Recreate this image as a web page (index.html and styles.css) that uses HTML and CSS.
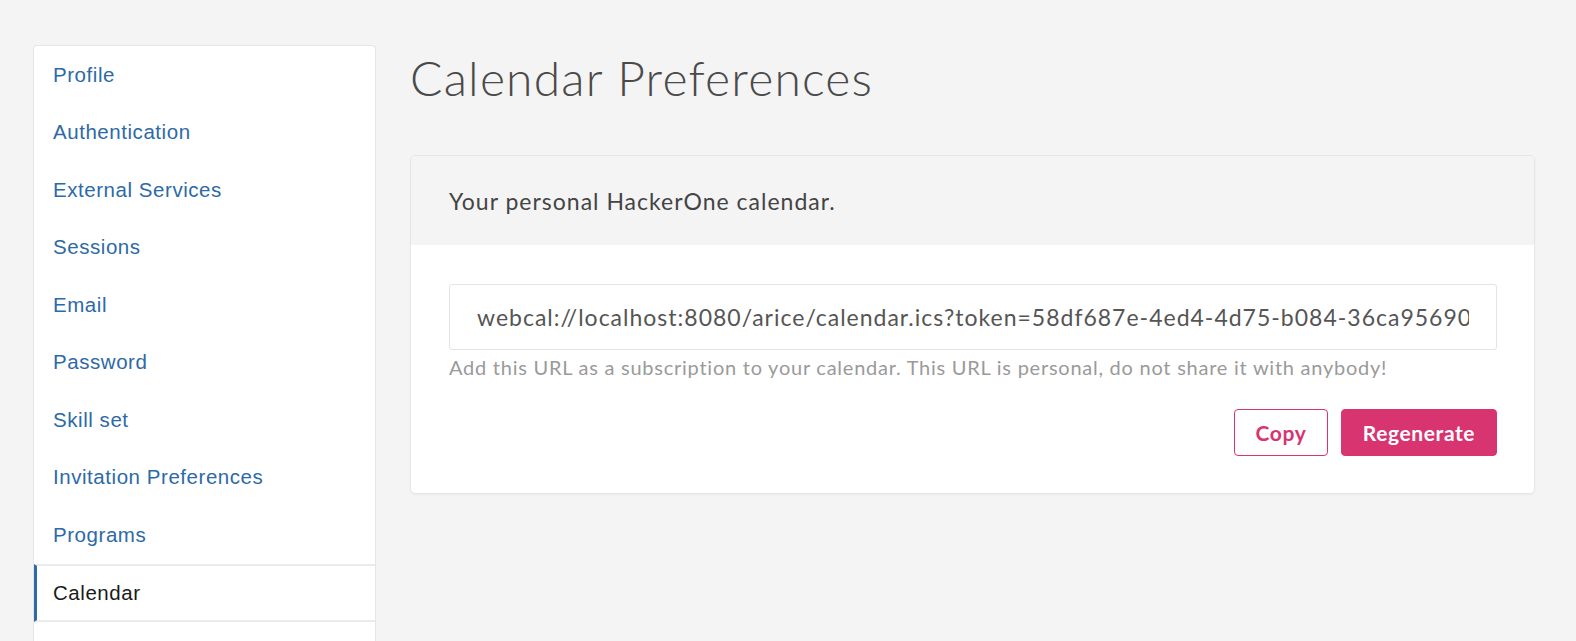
FILE: index.html
```html
<!DOCTYPE html>
<html lang="en">
<head>
<meta charset="utf-8">
<title>Calendar Preferences</title>
<link rel="stylesheet" href="styles.css">
</head>
<body>
<div class="page">
  <nav class="sidebar">
    <a class="nav-item" href="#">Profile</a>
    <a class="nav-item" href="#">Authentication</a>
    <a class="nav-item" href="#">External Services</a>
    <a class="nav-item" href="#">Sessions</a>
    <a class="nav-item" href="#">Email</a>
    <a class="nav-item" href="#">Password</a>
    <a class="nav-item" href="#">Skill set</a>
    <a class="nav-item" href="#">Invitation Preferences</a>
    <a class="nav-item" href="#">Programs</a>
    <a class="nav-item active" href="#">Calendar</a>
    <a class="nav-item" href="#">&nbsp;</a>
  </nav>
  <main class="main">
    <h1 class="title">Calendar Preferences</h1>
    <section class="card">
      <div class="card-header">Your personal HackerOne calendar.</div>
      <div class="card-body">
        <input class="url-input" type="text" readonly value="webcal://localhost:8080/arice/calendar.ics?token=58df687e-4ed4-4d75-b084-36ca95690c1e">
        <p class="hint">Add this URL as a subscription to your calendar. This URL is personal, do not share it with anybody!</p>
        <div class="actions">
          <button class="btn btn-outline" type="button">Copy</button>
          <button class="btn btn-primary" type="button">Regenerate</button>
        </div>
      </div>
    </section>
  </main>
</div>
</body>
</html>
```
FILE: styles.css
```css
* { box-sizing: border-box; }
html, body { margin: 0; padding: 0; }
body {
  background: #f4f4f4;
  height: 641px;
  overflow: hidden;
  font-family: "Lato", "Liberation Sans", sans-serif;
}
.page {
  display: flex;
  align-items: flex-start;
  gap: 34px;
  padding: 45px 41px 0 33px;
}
.sidebar {
  flex: 0 0 343px;
  background: #fff;
  border: 1px solid #e6e6e6;
  border-bottom: none;
  border-radius: 4px 4px 0 0;
  display: flex;
  flex-direction: column;
  height: 596px;
  overflow: hidden;
}
.nav-item {
  display: flex;
  align-items: center;
  height: 57.5px;
  flex: 0 0 57.5px;
  padding-left: 19px;
  font-family: "Liberation Sans", Arial, sans-serif;
  font-size: 20.5px;
  letter-spacing: 0.55px;
  color: #2d6aa6;
  text-decoration: none;
}
.nav-item.active {
  color: #1a1a1a;
  height: 58px;
  flex-basis: 58px;
  border-top: 2px solid #ebebeb;
  border-bottom: 2px solid #ebebeb;
  border-left: 3px solid #2d6aa6;
  padding-left: 16px;
}
.main {
  flex: 1 1 auto;
  min-width: 0;
  padding-top: 1px;
}
.title {
  margin: 3px 0 48px;
  font-size: 48px;
  line-height: 1.2;
  font-weight: 300;
  letter-spacing: 1.2px;
  color: #4a4a4a;
}
.card {
  background: #fff;
  border: 1px solid #e6e6e6;
  border-radius: 5px;
  overflow: hidden;
  box-shadow: 0 1px 2px rgba(0,0,0,0.04);
}
.card-header {
  background: #f4f4f4;
  height: 89px;
  display: flex;
  align-items: center;
  padding: 2px 38px 0;
  font-size: 23px;
  letter-spacing: 1px;
  color: #444;
}
.card-body {
  padding: 39px 37px 37px 38px;
}
.url-input {
  display: block;
  width: 100%;
  height: 66px;
  border: 1px solid #e4e4e4;
  border-radius: 3px;
  padding: 0 27px;
  font-family: "Lato", "Liberation Sans", sans-serif;
  font-size: 23px;
  letter-spacing: 1px;
  color: #555;
  background: #fff;
  outline: none;
}
.hint {
  margin: 4px 0 0;
  font-size: 20px;
  letter-spacing: 0.75px;
  line-height: 26px;
  color: #9a9a9a;
}
.actions {
  display: flex;
  justify-content: flex-end;
  gap: 13px;
  margin-top: 29px;
}
.btn {
  height: 47px;
  border-radius: 4px;
  font-family: "Lato", "Liberation Sans", sans-serif;
  font-size: 21px;
  letter-spacing: 0.6px;
  font-weight: 700;
  cursor: pointer;
}
.btn-outline {
  width: 94px;
  background: #fff;
  border: 1.5px solid #d83470;
  color: #d83470;
}
.btn-primary {
  width: 156px;
  background: #d83470;
  border: 1px solid #d83470;
  color: #fff;
}
```
